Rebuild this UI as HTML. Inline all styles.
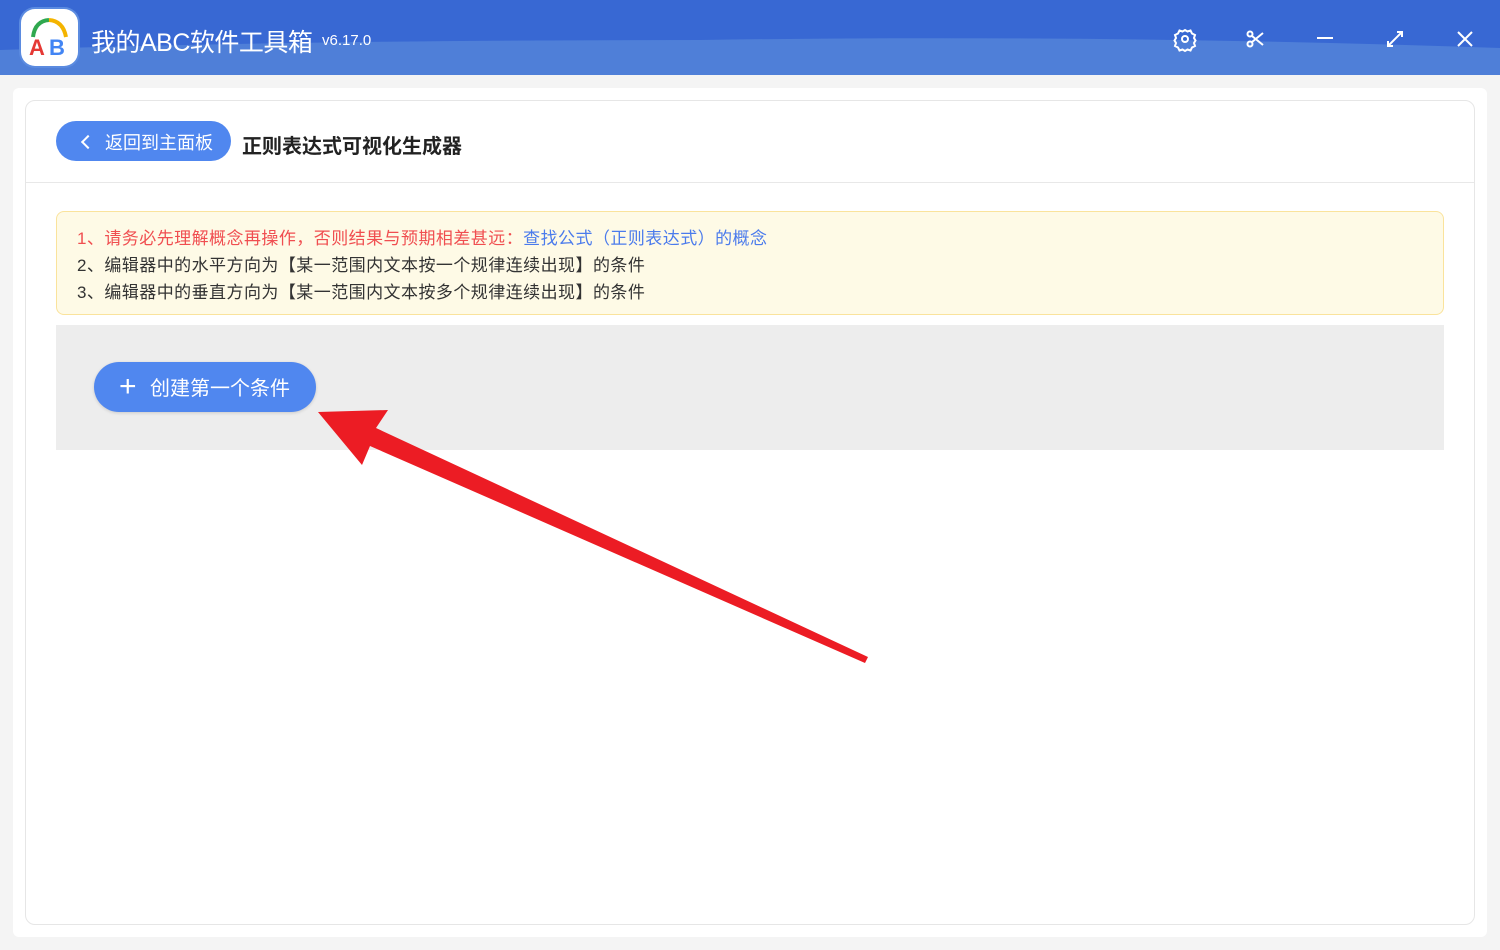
<!DOCTYPE html>
<html><head><meta charset="utf-8"><style>
*{margin:0;padding:0;box-sizing:border-box}
body{width:1500px;height:950px;background:#f4f4f4;font-family:"Liberation Sans","Noto Sans CJK SC",sans-serif;position:relative;overflow:hidden}
.hdr{position:absolute;left:0;top:0;width:1500px;height:75px;background:#3868d3;overflow:hidden}
.logo{position:absolute;left:21px;top:9px;width:57px;height:57px;border-radius:14px;background:#fff;box-shadow:0 0 0 2px #5b8be0}
.title{position:absolute;left:91px;top:23px;color:#fff;font-size:25px;letter-spacing:-0.5px}
.ver{position:absolute;left:322px;top:32px;color:#fff;font-size:15px}
.outer{position:absolute;left:13px;top:88px;width:1474px;height:849px;background:#fff;border-radius:6px}
.card{position:absolute;left:25px;top:100px;width:1450px;height:825px;border:1px solid #e6e6e6;border-radius:10px;background:#fff}
.back{position:absolute;left:56px;top:121px;width:175px;height:40px;border-radius:20px;background:#5087ef;color:#fff;font-size:18px;line-height:44px;padding-left:49px}
.back:before{content:"";position:absolute;left:27px;top:16px;width:8px;height:8px;border-left:2px solid #fff;border-bottom:2px solid #fff;transform:rotate(45deg)}
.h1{position:absolute;left:242px;top:130px;font-size:20px;font-weight:bold;color:#222}
.sep{position:absolute;left:26px;top:182px;width:1448px;height:1px;background:#e8e8e8}
.note{position:absolute;left:56px;top:211px;width:1388px;height:104px;background:#fefae6;border:1px solid #fae39c;border-radius:8px;padding:13px 0 0 20px;font-size:17px;line-height:27px;color:#333;letter-spacing:0.45px}
.red{color:#f04e50}.blue{color:#4b7bec}
.gray{position:absolute;left:56px;top:325px;width:1388px;height:125px;background:#ededed}
.btn{position:absolute;left:94px;top:362px;width:222px;height:50px;border-radius:25px;background:#5087ef;color:#fff;font-size:20px;line-height:54px;padding-left:56px;box-shadow:0 1px 3px rgba(0,0,0,.15)}
.btn:before{content:"+";position:absolute;left:25px;top:0px;font-size:30px;font-weight:300;line-height:50px}
</style></head><body>
<div class="hdr">
<svg width="1500" height="75" style="position:absolute;left:0;top:0"><path d="M0 50 Q300 40 700 40 Q1100 34 1500 48 L1500 75 L0 75Z" fill="#4f7fd8"/>
<g stroke="#fff" stroke-width="2" fill="none">
<circle cx="1185" cy="39" r="3"/><path d="M1185 30 l2.5 1.5 3-1 1.5 3 3 1.5-1 3 1.5 2.5-1.5 2.5 1 3-3 1.5-1.5 3-3-1-2.5 1.5-2.5-1.5-3 1-1.5-3-3-1.5 1-3-1.5-2.5 1.5-2.5-1-3 3-1.5 1.5-3 3 1z"/>
<circle cx="1250" cy="34" r="2.5"/><circle cx="1250" cy="44" r="2.5"/><path d="M1252 36 L1263 45 M1252 42 L1263 33"/>
<path d="M1317 38 H1333"/>
<path d="M1388 46 L1402 32 M1397 32 H1402 V37 M1388 41 V46 H1393"/>
<path d="M1458 32 L1472 46 M1472 32 L1458 46"/>
</g></svg>
<div class="logo"><svg width="57" height="57"><path d="M12 28 Q14 12 28 11" stroke="#2fa84f" stroke-width="4" fill="none"/><path d="M28 11 Q42 12 45 28" stroke="#f4b400" stroke-width="4" fill="none"/><text x="8" y="46" font-size="22" font-family="Liberation Sans" font-weight="bold" fill="#e53935">A</text><text x="28" y="46" font-size="22" font-family="Liberation Sans" font-weight="bold" fill="#4285f4">B</text></svg></div>
<div class="title">我的ABC软件工具箱</div><div class="ver">v6.17.0</div>
</div>
<div class="outer"></div>
<div class="card"></div>
<div class="back">返回到主面板</div>
<div class="h1">正则表达式可视化生成器</div>
<div class="sep"></div>
<div class="note"><div><span class="red">1、请务必先理解概念再操作，否则结果与预期相差甚远：</span><span class="blue">查找公式（正则表达式）的概念</span></div><div>2、编辑器中的水平方向为【某一范围内文本按一个规律连续出现】的条件</div><div>3、编辑器中的垂直方向为【某一范围内文本按多个规律连续出现】的条件</div></div>
<div class="gray"></div>
<div class="btn">创建第一个条件</div>
<svg width="1500" height="950" style="position:absolute;left:0;top:0"><polygon points="318,412 388,410 376,428 868,657 865,663 370,446 362,465" fill="#ec1c24"/></svg>
</body></html>
